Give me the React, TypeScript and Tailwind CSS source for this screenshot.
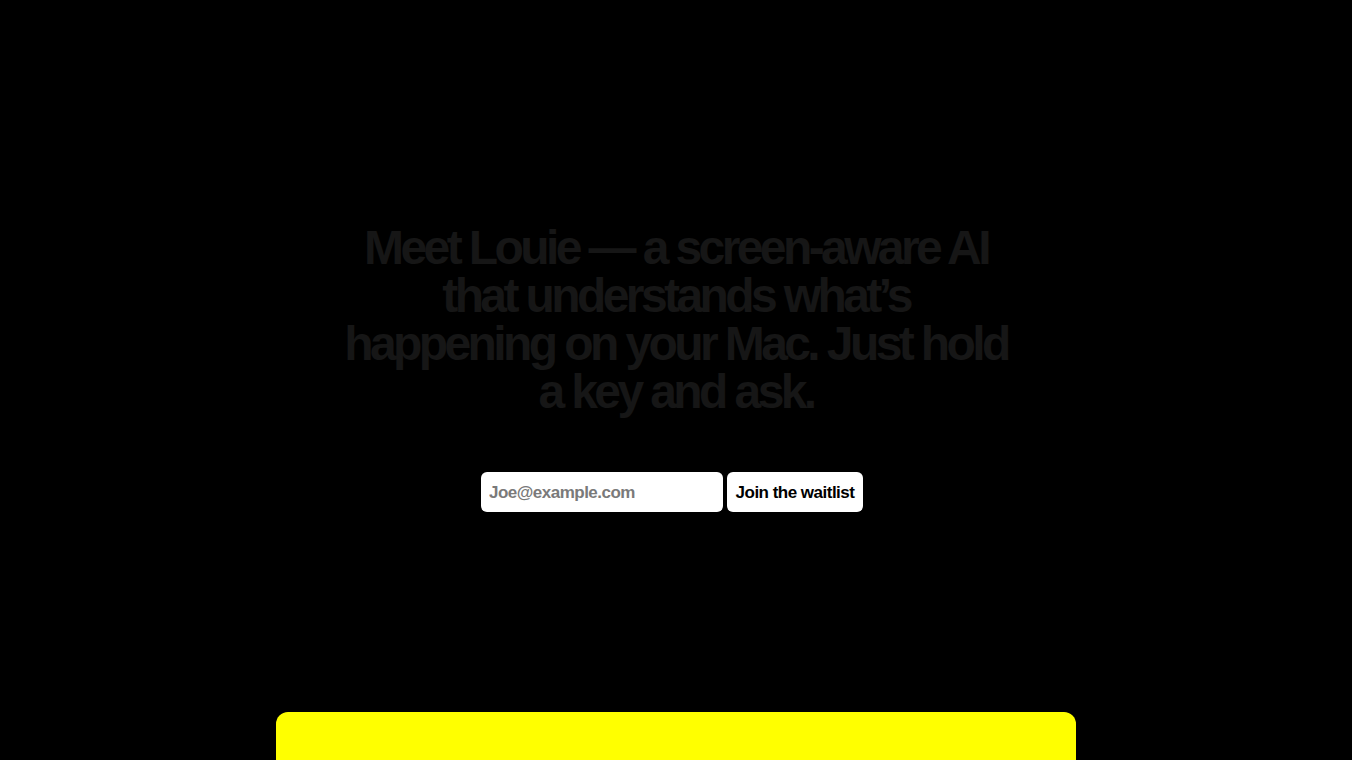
export default function App() {
  return (
    <div className="min-h-screen bg-black flex flex-col items-center overflow-hidden" style={{ height: 760 }}>
      <div className="h-[224px] shrink-0" />
      <h1 className="w-[672px] text-center text-[48px] leading-[48px] font-bold tracking-[-0.075em] text-[#161616] font-['Liberation_Sans',Arial,sans-serif]">
        Meet Louie — a screen-aware AI that understands what’s happening on your Mac. Just hold a key and ask.
      </h1>
      <form className="mt-[56px] mr-2 flex gap-1 font-['Liberation_Sans',Arial,sans-serif]" onSubmit={(e) => e.preventDefault()}>
        <input
          type="email"
          placeholder="Joe@example.com"
          className="w-[242px] h-10 rounded-md bg-white px-2 pt-0.5 text-[17px] font-bold tracking-[-0.03em] text-black placeholder:text-[#7a7a7a] outline-none"
        />
        <button className="h-10 w-[136px] rounded-md bg-white pt-0.5 text-[17px] font-bold tracking-[-0.03em] text-black">
          Join the waitlist
        </button>
      </form>
      <div className="mt-[200px] w-[800px] h-[300px] shrink-0 rounded-xl bg-[#ffff00]" />
    </div>
  );
}
